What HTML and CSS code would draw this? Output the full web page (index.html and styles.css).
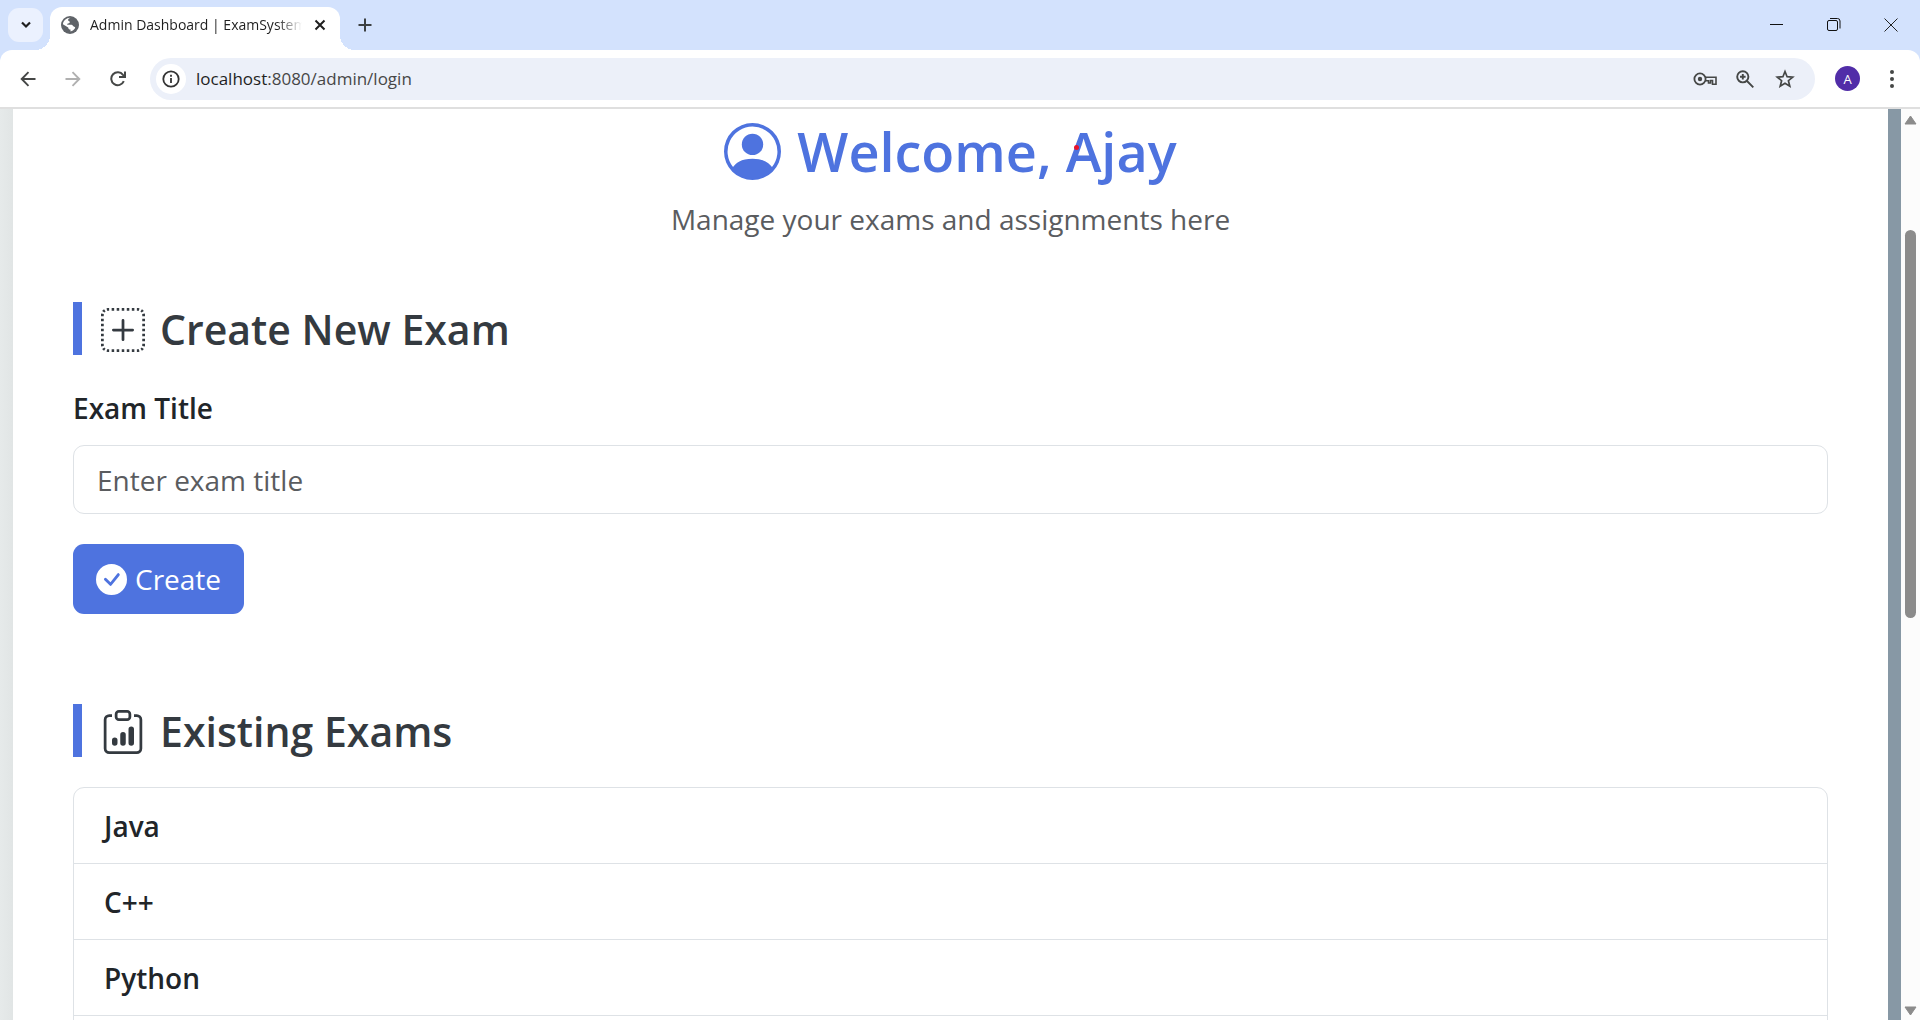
FILE: index.html
```html
<!DOCTYPE html>
<html lang="en">
<head>
<meta charset="utf-8">
<title>Admin Dashboard | ExamSystem</title>
<link rel="stylesheet" href="styles.css">
</head>
<body>
<header class="browser">
  <div class="tab-strip">
    <button class="tab-search" aria-label="Search tabs"><svg width="12" height="8" viewBox="0 0 12 8"><path d="M2 1.500 6 5.500l4-4" fill="none" stroke="#1f1f1f" stroke-width="2.200"/></svg></button>
    <div class="tab">
      <svg class="tab-favicon" width="18" height="18" viewBox="0 0 18 18"><circle cx="9" cy="9" r="9" fill="#5f6368"/><path d="M9.500 1.800C8 2.200 6.800 3.200 7.200 4.500c.3 1 2 .6 1.600 1.900C8.400 7.600 6.200 6.800 6.200 8.800h4.300c1.500 0 1.200 1.900 2.700 1.900.9 0 1.300.9.600 1.900-1 1.500-2.600 2.700-4.300 2.900v-2c-1.500 0-2.300-.9-2.300-2.100L1.900 8.200C2.200 4.700 5.500 1.600 9.500 1.800Z" fill="#fff"/><path d="M11.600 2.600c2.600 1 4.300 3.300 4.500 6.100-1.200.5-1.500-1-3-1-1.200 0-2.300-.6-2.300-1.700 0-1.200 1.200-1 1.200-2Z" fill="#5f6368"/></svg>
      <span class="tab-title">Admin Dashboard | ExamSystem</span>
      <button class="tab-close" aria-label="Close tab"><svg width="12" height="12" viewBox="0 0 12 12"><path d="m1.500 1.500 9 9m0-9-9 9" stroke="#1f1f1f" stroke-width="2"/></svg></button>
    </div>
    <button class="new-tab" aria-label="New tab"><svg width="14" height="14" viewBox="0 0 14 14"><path d="M7 .5v13M.5 7h13" stroke="#3c4043" stroke-width="2"/></svg></button>
    <div class="window-controls">
      <button aria-label="Minimize"><svg width="14" height="14" viewBox="0 0 14 14"><path d="M0 6.500h13" stroke="#111"/></svg></button>
      <button aria-label="Restore"><svg width="14" height="14" viewBox="0 0 14 14"><rect x=".5" y="2.500" width="10" height="10" rx="1.500" fill="none" stroke="#111"/><path d="M3 .5h7.500a2.500 2.500 0 0 1 2.500 2.500v7.500" fill="none" stroke="#111"/></svg></button>
      <button aria-label="Close"><svg width="14" height="14" viewBox="0 0 14 14"><path d="m.5.5 13 13m0-13-13 13" stroke="#222"/></svg></button>
    </div>
  </div>
  <div class="toolbar">
    <button class="nav" aria-label="Back"><svg width="16" height="16" viewBox="0 0 16 16"><path d="M15.500 8H2M8.500 1.200 1.700 8l6.800 6.800" fill="none" stroke="#454746" stroke-width="1.900"/></svg></button>
    <button class="nav" aria-label="Forward"><svg width="16" height="16" viewBox="0 0 16 16"><path d="M.5 8H14M7.500 1.200 14.300 8l-6.800 6.800" fill="none" stroke="#b0b0b0" stroke-width="1.900"/></svg></button>
    <button class="nav" aria-label="Reload"><svg width="16" height="16" viewBox="0 0 16 16"><path d="M13.800 10.200A6.500 6.500 0 1 1 13 3.800L14.500 5.500M9 6h6V.5" fill="none" stroke="#454746" stroke-width="2"/></svg></button>
    <div class="omnibox">
      <button class="site-info" aria-label="Site information"><svg width="18" height="18" viewBox="0 0 18 18"><circle cx="9" cy="9" r="7.700" fill="none" stroke="#333" stroke-width="1.800"/><path d="M9 8v5M9 4.800v1.900" stroke="#333" stroke-width="1.800"/></svg></button>
      <span class="url"><span class="host">localhost</span>:8080/admin/login</span>
      <button class="tool" aria-label="Passwords"><svg width="24" height="14" viewBox="0 0 24 14"><circle cx="7" cy="7" r="5.600" fill="none" stroke="#454746" stroke-width="1.800"/><circle cx="7" cy="7" r="2.200" fill="#454746"/><path d="M12 5.200h11v7h-3.500V8.500h-2V11h-2V8.800H12" fill="none" stroke="#454746" stroke-width="1.600"/></svg></button>
      <button class="tool" aria-label="Zoom"><svg width="18" height="18" viewBox="0 0 18 18"><circle cx="6.800" cy="6.800" r="5.600" fill="none" stroke="#454746" stroke-width="1.900"/><path d="m11 11 6.300 6.300M6.800 4v5.600M4 6.800h5.600" stroke="#454746" stroke-width="1.900"/></svg></button>
      <button class="tool" aria-label="Bookmark"><svg width="20" height="20" viewBox="0 0 20 20"><path d="m10 2.500 2.100 5.200 5.600.4-4.300 3.600 1.400 5.500-4.800-3-4.800 3 1.400-5.500-4.300-3.600 5.600-.4Z" fill="none" stroke="#454746" stroke-width="1.700"/></svg></button>
    </div>
    <button class="profile" aria-label="Profile">A</button>
    <button class="menu" aria-label="Menu"><svg width="4" height="18" viewBox="0 0 4 18" fill="#454746"><circle cx="2" cy="2" r="2"/><circle cx="2" cy="9" r="2"/><circle cx="2" cy="16" r="2"/></svg></button>
  </div>
</header>
<div class="viewport">
  <main class="dashboard">
    <div class="welcome">
      <h1><svg class="icon" viewBox="0 0 16 16"><path d="M11 6a3 3 0 1 1-6 0 3 3 0 0 1 6 0"/><path fill-rule="evenodd" d="M0 8a8 8 0 1 1 16 0A8 8 0 0 1 0 8m8-7a7 7 0 0 0-5.468 11.370C3.242 11.226 4.805 10 8 10s4.757 1.225 5.468 2.370A7 7 0 0 0 8 1"/></svg><span>Welcome, <span class="admin-name">Ajay</span></span></h1>
      <p>Manage your exams and assignments here</p>
    </div>
    <section class="create">
      <h2><svg class="icon" viewBox="0 0 16 16"><path d="M2.500 0q-.25 0-.487.048l.194.980A1.500 1.500 0 0 1 2.500 1h.458V0zm2.292 0h-.917v1h.917zm1.833 0h-.917v1h.917zm1.833 0h-.916v1h.916zm1.834 0h-.917v1h.917zm1.833 0h-.917v1h.917zM13.500 0h-.458v1h.458q.151 0 .293.029l.194-.981A2.500 2.500 0 0 0 13.500 0m2.079 1.110a2.500 2.500 0 0 0-.690-.689l-.556.831q.248.167.415.415l.830-.556zM1.110.421a2.500 2.500 0 0 0-.689.690l.831.556c.110-.164.251-.305.415-.415zM16 2.500q0-.25-.048-.487l-.980.194q.027.141.028.293v.458h1zM.048 2.013A2.500 2.500 0 0 0 0 2.500v.458h1V2.500q0-.151.029-.293zM0 3.875v.917h1v-.917zm16 .917v-.917h-1v.917zM0 5.708v.917h1v-.917zm16 .917v-.917h-1v.917zM0 7.542v.916h1v-.916zm15 .916h1v-.916h-1zM0 9.375v.917h1v-.917zm16 .917v-.917h-1v.917zm-16 .916v.917h1v-.917zm16 .917v-.917h-1v.917zm-16 .917v.458q0 .25.048.487l.980-.194A1.500 1.500 0 0 1 1 13.500v-.458zm16 .458v-.458h-1v.458q0 .151-.029.293l.981.194Q16 13.750 16 13.500M.421 14.890c.183.272.417.506.690.689l.556-.831a1.500 1.500 0 0 1-.415-.415zm14.469.689c.272-.183.506-.417.689-.690l-.831-.556c-.110.164-.251.305-.415.415l.556.830zm-12.877.373Q2.250 16 2.500 16h.458v-1H2.500q-.151 0-.293-.029zM13.500 16q.25 0 .487-.048l-.194-.980A1.500 1.500 0 0 1 13.500 15h-.458v1zm-9.625 0h.917v-1h-.917zm1.833 0h.917v-1h-.917zm1.834-1v1h.916v-1zm1.833 1h.917v-1h-.917zm1.833 0h.917v-1h-.917zM8.500 4.500a.5.5 0 0 0-1 0v3h-3a.5.5 0 0 0 0 1h3v3a.5.5 0 0 0 1 0v-3h3a.5.5 0 0 0 0-1h-3z"/></svg>Create New Exam</h2>
      <form>
        <label for="exam-title">Exam Title</label>
        <input id="exam-title" type="text" placeholder="Enter exam title">
        <button class="submit" type="button"><svg class="icon" viewBox="0 0 16 16"><path d="M16 8A8 8 0 1 1 0 8a8 8 0 0 1 16 0m-3.970-3.030a.75.75 0 0 0-1.080.022L7.477 9.417 5.384 7.323a.75.75 0 0 0-1.060 1.060L6.970 11.030a.75.75 0 0 0 1.079-.020l3.992-4.990a.75.75 0 0 0-.010-1.050z"/></svg>Create</button>
      </form>
    </section>
    <section>
      <h2><svg class="icon" viewBox="0 0 16 16"><path d="M4 11a1 1 0 1 1 2 0v1a1 1 0 1 1-2 0zm6-4a1 1 0 1 1 2 0v5a1 1 0 1 1-2 0zM7 9a1 1 0 0 1 2 0v3a1 1 0 1 1-2 0z"/><path d="M4 1.500H3a2 2 0 0 0-2 2V14a2 2 0 0 0 2 2h10a2 2 0 0 0 2-2V3.500a2 2 0 0 0-2-2h-1v1h1a1 1 0 0 1 1 1V14a1 1 0 0 1-1 1H3a1 1 0 0 1-1-1V3.500a1 1 0 0 1 1-1h1z"/><path d="M9.500 1a.5.5 0 0 1 .5.5v1a.5.5 0 0 1-.5.5h-3a.5.5 0 0 1-.5-.5v-1a.5.5 0 0 1 .5-.5zm-3-1A1.500 1.500 0 0 0 5 1.500v1A1.500 1.500 0 0 0 6.500 4h3A1.500 1.500 0 0 0 11 2.500v-1A1.500 1.500 0 0 0 9.500 0z"/></svg>Existing Exams</h2>
      <ul class="exam-list">
        <li>Java</li>
        <li>C++</li>
        <li>Python</li>
      </ul>
    </section>
  </main>
  <div class="scrollbar">
    <svg width="13" height="10" viewBox="0 0 13 10"><path d="M6.500 1 12 9H1Z" fill="#8b8b8b" stroke="#8b8b8b" stroke-linejoin="round"/></svg>
    <div class="track"><div class="thumb"></div></div>
    <svg width="13" height="10" viewBox="0 0 13 10"><path d="M6.500 9 12 1H1Z" fill="#8b8b8b" stroke="#8b8b8b" stroke-linejoin="round"/></svg>
  </div>
</div>
</body>
</html>
```
FILE: styles.css
```css
* { box-sizing: border-box; }

body {
  margin: 0;
  height: 100vh;
  display: flex;
  flex-direction: column;
  overflow: hidden;
  background: #fff;
  color: #212529;
  font-family: "Open Sans", "Noto Sans", sans-serif;
}

button {
  display: flex;
  align-items: center;
  justify-content: center;
  flex: none;
  padding: 0;
  border: 0;
  background: none;
  font-family: inherit;
}

svg { display: block; flex: none; }
.icon { fill: currentColor; }

/* Browser frame */
.browser { flex: none; background: #d3e2fd; border-bottom: 2px solid #dfdfdf; }

.tab-strip { display: flex; align-items: center; height: 50px; padding-left: 8px; }
.tab-search { width: 35px; height: 34px; border-radius: 11px; background: #ebf1fe; }

.tab {
  position: relative;
  display: flex;
  align-items: center;
  align-self: flex-end;
  width: 290px;
  height: 43px;
  margin-left: 7px;
  padding: 0 14px 7px 11px;
  border-radius: 12px 12px 0 0;
  background: #fff;
}
.tab::before,
.tab::after {
  content: "";
  position: absolute;
  bottom: 0;
  width: 15px;
  height: 15px;
}
.tab::before { left: -15px; background: radial-gradient(circle at 0 0, transparent 15px, #fff 15px); }
.tab::after { right: -15px; background: radial-gradient(circle at 100% 0, transparent 15px, #fff 15px); }

.tab-title {
  flex: 1;
  min-width: 0;
  margin: 0 12px 0 11px;
  overflow: hidden;
  white-space: nowrap;
  font-size: 14px;
  line-height: 20px;
  color: #1f1f1f;
  mask-image: linear-gradient(to right, #000 88%, transparent);
}
.new-tab { width: 34px; height: 34px; margin-left: 8px; }
.window-controls { display: flex; margin-left: auto; padding-right: 1px; }
.window-controls button { width: 57px; height: 48px; }

.toolbar {
  display: flex;
  align-items: center;
  height: 57px;
  padding: 0 23px 0 5px;
  border-radius: 12px 12px 0 0;
  background: #fff;
}
.nav { width: 45px; height: 40px; }
.omnibox {
  display: flex;
  align-items: center;
  flex: 1;
  height: 42px;
  margin-left: 10px;
  padding: 0 18px 0 6px;
  border-radius: 21px;
  background: #ecf0f9;
}
.site-info { width: 30px; height: 30px; border-radius: 50%; background: #fff; }
.url { flex: 1; margin-left: 10px; font-size: 17px; line-height: 24px; color: #474747; }
.host { color: #1f1f1f; }
.tool { width: 24px; margin-left: 16px; }
.profile {
  width: 25px;
  height: 25px;
  margin-left: 20px;
  border-radius: 50%;
  background: #512da8;
  color: #fff;
  font-size: 13px;
}
.menu { margin-left: 27px; width: 10px; }

/* Page */
.viewport {
  display: flex;
  flex: 1;
  min-height: 0;
  background: linear-gradient(to right, #e6eaea, #e1e5e5 13px, #8798a5 13px);
}

.dashboard {
  flex: 1;
  min-width: 0;
  margin: 0 13px;
  padding: 4px 60px 0;
  overflow: hidden;
  background: #fff;
}

.welcome { margin-bottom: 52px; text-align: center; }

h1, h2, p { margin: 0; }

h1 {
  display: flex;
  justify-content: center;
  align-items: center;
  gap: 16px;
  font-size: 54px;
  line-height: 76px;
  font-weight: 600;
  color: #4e73df;
}
h1 .icon { width: 57px; height: 57px; }
.admin-name { position: relative; }
.admin-name::after {
  content: "";
  position: absolute;
  left: 8px;
  top: 31px;
  width: 5px;
  height: 5px;
  border-radius: 50%;
  background: #e8132b;
}
p { font-size: 28px; line-height: 61px; color: #5a5c5f; }

h2 {
  display: flex;
  align-items: center;
  gap: 15px;
  height: 53px;
  padding: 2px 0 0 19px;
  border-left: 9px solid #4e73df;
  font-size: 41px;
  line-height: 51px;
  font-weight: 600;
  color: #343a40;
}
h2 .icon { width: 44px; height: 44px; }

.create { margin-bottom: 90px; }

form { display: flex; flex-direction: column; align-items: flex-start; margin-top: 31px; }

label { font-size: 28px; line-height: 44px; font-weight: 600; }

input {
  width: 100%;
  height: 69px;
  margin: 15px 0 30px;
  padding: 0 23px;
  border: 1px solid #dee2e6;
  border-radius: 11px;
  font-family: inherit;
  font-size: 28px;
  color: #212529;
}
input::placeholder { color: #5a5c5f; opacity: 1; }

.submit {
  gap: 8px;
  height: 70px;
  padding: 0 23px;
  border-radius: 11px;
  background: #4e73df;
  color: #fff;
  font-size: 28px;
}
.submit .icon { width: 31px; height: 31px; }

.exam-list {
  margin: 30px 0 0;
  padding: 0 0 30px;
  list-style: none;
  border: 1px solid #dee2e6;
  border-radius: 11px;
}
.exam-list li {
  padding: 1px 30px 0;
  border-bottom: 1px solid #dee2e6;
  font-size: 28px;
  line-height: 74px;
  font-weight: 600;
}

.scrollbar {
  display: flex;
  flex-direction: column;
  align-items: center;
  flex: none;
  width: 19px;
  padding: 6px 0 4px;
  background: #fcfcfc;
}
.track { flex: 1; width: 11px; padding-top: 105px; }
.thumb { height: 50%; border-radius: 6px; background: #8b8b8b; }
```
